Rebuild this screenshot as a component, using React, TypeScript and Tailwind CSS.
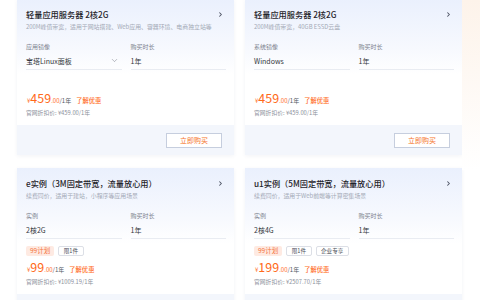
import React from "react";
import { ChevronDown, ChevronRight } from "lucide-react";

type Card = {
  title: string;
  desc: string;
  l1: string;
  v1: string;
  select?: boolean;
  tags: string[];
  price: string;
  official: string;
};

const cards: Card[] = [
  {
    title: "轻量应用服务器 2核2G",
    desc: "200M峰值带宽，适用于网站搭建、Web应用、容器环境、电商独立站等",
    l1: "应用镜像",
    v1: "宝塔Linux面板",
    select: true,
    tags: [],
    price: "459",
    official: "官网折扣价: ¥459.00/1年",
  },
  {
    title: "轻量应用服务器 2核2G",
    desc: "200M峰值带宽，40GB ESSD云盘",
    l1: "系统镜像",
    v1: "Windows",
    tags: [],
    price: "459",
    official: "官网折扣价: ¥459.00/1年",
  },
  {
    title: "e实例（3M固定带宽，流量放心用）",
    desc: "续费同价，适用于建站，小程序等应用场景",
    l1: "实例",
    v1: "2核2G",
    tags: ["99计划", "限1件"],
    price: "99",
    official: "官网折扣价: ¥1009.19/1年",
  },
  {
    title: "u1实例（5M固定带宽，流量放心用）",
    desc: "续费同价，适用于Web前端等计算密集场景",
    l1: "实例",
    v1: "2核4G",
    tags: ["99计划", "限1件", "企业专享"],
    price: "199",
    official: "官网折扣价: ¥2507.70/1年",
  },
];

function ProductCard({ c }: { c: Card }) {
  return (
    <div className="flex flex-col bg-white shadow-[0_1px_4px_rgba(30,50,100,0.06)]">
      <div className="flex flex-col bg-gradient-to-b from-[#eaf0fd] via-[#f7f9fe] via-40% to-white to-60% pl-[9px] pr-[8px] pt-[10px] pb-[8px]">
        <div className="flex h-[11px] items-center justify-between">
          <span className="text-[8.2px] font-medium leading-[11px] text-[#1f2329]">{c.title}</span>
          <ChevronRight size={7} strokeWidth={3.5} className="mr-[2px] text-[#4a5060]" />
        </div>
        <div className="mt-[3px] h-[8px] whitespace-nowrap text-[5.9px] leading-[8px] text-[#a3a9b6]">{c.desc}</div>
        <div className="mt-[12px] grid grid-cols-2 gap-x-[9px] leading-[8px]">
          <div className="text-[6px] leading-[8px] text-[#7d838f]">{c.l1}</div>
          <div className="text-[6px] leading-[8px] text-[#7d838f]">购买时长</div>
          <div className="mt-[5px] flex h-[14px] items-start justify-between border-b border-[#e9ecf2]">
            <span className="text-[7px] leading-[10px] text-[#333840]">{c.v1}</span>
            {c.select && <ChevronDown size={9} strokeWidth={1.2} className="mr-[3px] text-[#666c78]" />}
          </div>
          <div className="mt-[5px] flex h-[14px] items-start border-b border-[#e9ecf2]">
            <span className="text-[7px] leading-[10px] text-[#333840]">1年</span>
          </div>
        </div>
        <div className="mt-[7px] flex h-[10px] gap-[4px]">
          {c.tags.map((t, i) =>
            i === 0 ? (
              <span key={t} className="flex h-[10px] items-center rounded-[2px] bg-[#feeae2] px-[4px] text-[6.5px] text-[#f5763f]">
                {t}
              </span>
            ) : (
              <span key={t} className="flex h-[10px] items-center rounded-[2px] border border-[#dcdfe6] bg-white px-[4.5px] text-[5.6px] text-[#4a4f59]">
                {t}
              </span>
            )
          )}
        </div>
        <div className="mt-[4px] flex h-[14px] items-baseline leading-[14px]">
          <span className="ml-[1px] text-[6px] text-[#ff6a1a]">¥</span>
          <span className="text-[12.5px] leading-[14px] text-[#ff6a1a]">{c.price}</span>
          <span className="text-[6px] text-[#ff6a1a]">.00</span>
          <span className="text-[6px] text-[#555a64]">/1年</span>
          <span className="ml-[5px] text-[6.3px] font-medium text-[#ff6a1a]">了解优惠</span>
        </div>
        <div className="mt-[4px] h-[8px] text-[5.8px] leading-[8px] text-[#8c919c]">{c.official}</div>
      </div>
      <div className="flex h-[30px] items-start justify-end bg-[#f3f6fc] pr-[12px] pt-[8px]">
        <button className="flex h-[15px] w-[56px] items-center justify-center border border-[#c6cede] bg-white text-[7px] text-[#f5731f]">
          立即购买
        </button>
      </div>
    </div>
  );
}

export default function App() {
  return (
    <div
      className="flex h-[300px] w-[480px] overflow-hidden bg-white"
      style={{ fontFamily: '"Noto Sans CJK SC", "Noto Sans", sans-serif' }}
    >
      <div className="-mt-px grid w-[462px] shrink-0 grid-cols-[217px_217px] content-start gap-x-[11px] gap-y-[13px] pl-[17px]">
        {cards.map((c, i) => (
          <ProductCard key={i} c={c} />
        ))}
      </div>
      <div className="h-[170px] flex-1 bg-gradient-to-b from-[#fdf3ea] to-white" />
    </div>
  );
}
